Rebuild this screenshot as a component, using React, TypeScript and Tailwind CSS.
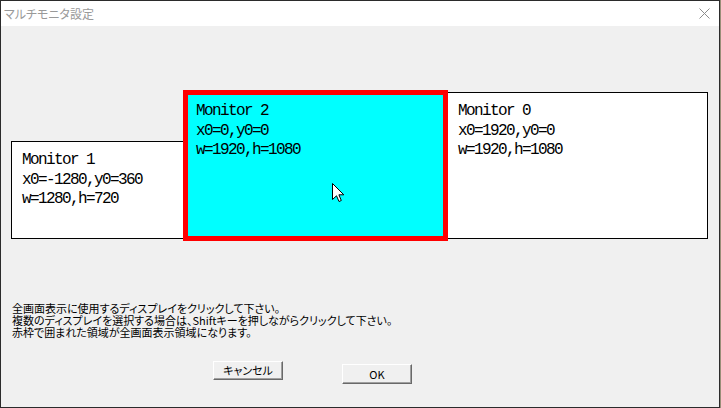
const SCALE = 0.13613
const ORIGIN_X = 184.2
const ORIGIN_Y = 66

type Monitor = { id: number; x: number; y: number; w: number; h: number; selected?: boolean }

// selected one last so its red frame sits on top
const monitors: Monitor[] = [
  { id: 1, x: -1280, y: 360, w: 1280, h: 720 },
  { id: 0, x: 1920, y: 0, w: 1920, h: 1080 },
  { id: 2, x: 0, y: 0, w: 1920, h: 1080, selected: true },
]

function toRect(m: Monitor) {
  const left = Math.round(ORIGIN_X + m.x * SCALE)
  const right = Math.round(ORIGIN_X + (m.x + m.w) * SCALE)
  const top = Math.round(ORIGIN_Y + m.y * SCALE)
  const bottom = Math.round(ORIGIN_Y + (m.y + m.h) * SCALE)
  if (m.selected) {
    return { left: left - 2, top: top - 2, width: right - left + 3, height: bottom - top + 4 }
  }
  return { left, top, width: right - left, height: bottom - top }
}

const jp = "font-['Noto_Sans_CJK_JP',sans-serif] [font-feature-settings:'palt']"

function MonitorBox({ m }: { m: Monitor }) {
  return (
    <div
      className={`absolute font-['Liberation_Mono',monospace] text-[16px] leading-[19.5px] tracking-[-1.6px] text-black ${
        m.selected
          ? 'border-[5px] border-[#ff0000] bg-[#00ffff] pl-[8px] pt-[7px]'
          : 'border border-black bg-white pl-[10px] pt-[9px]'
      }`}
      style={toRect(m)}
    >
      <div>Monitor {m.id}</div>
      <div>x0={m.x},y0={m.y}</div>
      <div>w={m.w},h={m.h}</div>
    </div>
  )
}

function Cursor() {
  return (
    <svg className="absolute left-[331px] top-[157px]" width="13" height="20" viewBox="0 0 13 20">
      <path
        d="M0.5 0.5 L0.5 16.5 L4.5 12.8 L7 18.5 L9.3 17.5 L6.9 11.8 L11.8 11.8 Z"
        fill="#fff"
        stroke="#000"
        strokeWidth="1"
        strokeLinejoin="miter"
      />
    </svg>
  )
}

function Win98Button({ label, className }: { label: string; className: string }) {
  return (
    <button
      className={`flex w-[70px] items-center justify-center border-t border-l border-t-white border-l-white border-r border-b border-r-[#696969] border-b-[#696969] bg-[#f0f0f0] shadow-[inset_-1px_-1px_#a0a0a0] text-[11px] text-black ${jp} ${className}`}
    >
      {label}
    </button>
  )
}

export default function App() {
  return (
    <div className="flex h-[408px] w-[721px] bg-[#9a8e78]">
      <div className="flex h-[408px] w-[720px] flex-col border border-[#2b2b2b] bg-[#f0f0f0]">
        <div className="flex h-[25px] shrink-0 items-center justify-between bg-white pl-[3px] pr-[9px]">
          <span className={`text-[12px] text-[#999999] ${jp}`}>マルチモニタ設定</span>
          <svg width="11" height="11" viewBox="0 0 11 11">
            <path d="M0.5 0.5 L10.5 10.5 M10.5 0.5 L0.5 10.5" stroke="#8c8c8c" strokeWidth="1" />
          </svg>
        </div>

        <div className="relative h-[276px] shrink-0">
          {monitors.map((m) => (
            <MonitorBox key={m.id} m={m} />
          ))}
          <Cursor />
        </div>

        <div className={`pl-[11px] text-[11px] leading-[12px] text-black ${jp}`}>
          <div>全画面表示に使用するディスプレイをクリックして下さい。</div>
          <div>複数のディスプレイを選択する場合は、Shiftキーを押しながらクリックして下さい。</div>
          <div>赤枠で囲まれた領域が全画面表示領域になります。</div>
        </div>

        <div className="mt-[23px] ml-[212px] flex items-start gap-[59px]">
          <Win98Button label="キャンセル" className="h-[19px]" />
          <Win98Button label="OK" className="mt-[3px] h-[20px]" />
        </div>
      </div>
    </div>
  )
}
